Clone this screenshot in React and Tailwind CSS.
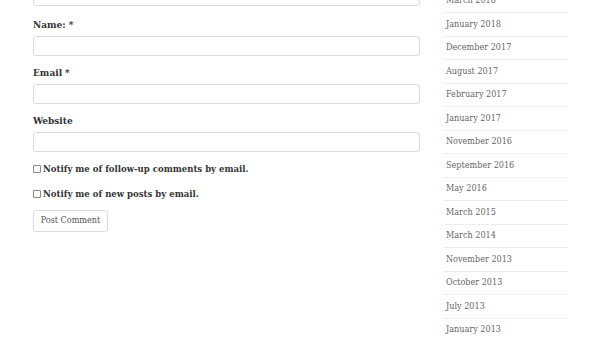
import React from 'react';

const archives = [
    'March 2018',
    'January 2018',
    'December 2017',
    'August 2017',
    'February 2017',
    'January 2017',
    'November 2016',
    'September 2016',
    'May 2016',
    'March 2015',
    'March 2014',
    'November 2013',
    'October 2013',
    'July 2013',
    'January 2013',
];

const Field = ({ label, required = false }) => (
    <div className="flex flex-col">
        <label className="h-[12px] flex items-center text-[10px] font-bold text-[#333]">
            {label}
            {required && <span className="ml-[3px]">*</span>}
        </label>
        <div className="mt-[6px] h-[20px] rounded-[3px] border border-[#dcdcdc] bg-white"></div>
    </div>
);

const Check = ({ text }) => (
    <label className="h-[12px] flex items-center text-[9.5px] font-bold text-[#333]">
        <span className="w-[8px] h-[8px] border border-[#8a8a8a] rounded-[1px] mr-[2px] bg-white"></span>
        {text}
    </label>
);

export default function App() {
    return (
        <div
            className="w-[600px] h-[338px] overflow-hidden bg-white flex"
            style={{ fontFamily: '"DejaVu Serif Condensed", "DejaVu Serif", serif' }}
        >
            {/* Comment form */}
            <div className="ml-[33px] w-[387px] flex flex-col">
                <div className="-mt-[34px] h-[40px] rounded-[3px] border border-[#dcdcdc]"></div>
                <div className="mt-[12px] flex flex-col gap-[10px]">
                    <Field label="Name:" required />
                    <Field label="Email" required />
                    <Field label="Website" />
                </div>
                <div className="mt-[11px] flex flex-col gap-[13px]">
                    <Check text="Notify me of follow-up comments by email." />
                    <Check text="Notify me of new posts by email." />
                </div>
                <button className="mt-[10px] self-start h-[22px] w-[75px] rounded-[3px] border border-[#ddd] bg-white text-[9px] text-[#555]">
                    Post Comment
                </button>
            </div>

            {/* Archives */}
            <ul className="ml-[24px] w-[124px] -mt-[11.5px] flex flex-col">
                {archives.map((a) => (
                    <li key={a} className="shrink-0 h-[23.5px] border-t border-[#eee] flex items-center pl-[2px] text-[9px] text-[#666]">
                        {a}
                    </li>
                ))}
            </ul>
        </div>
    );
}
